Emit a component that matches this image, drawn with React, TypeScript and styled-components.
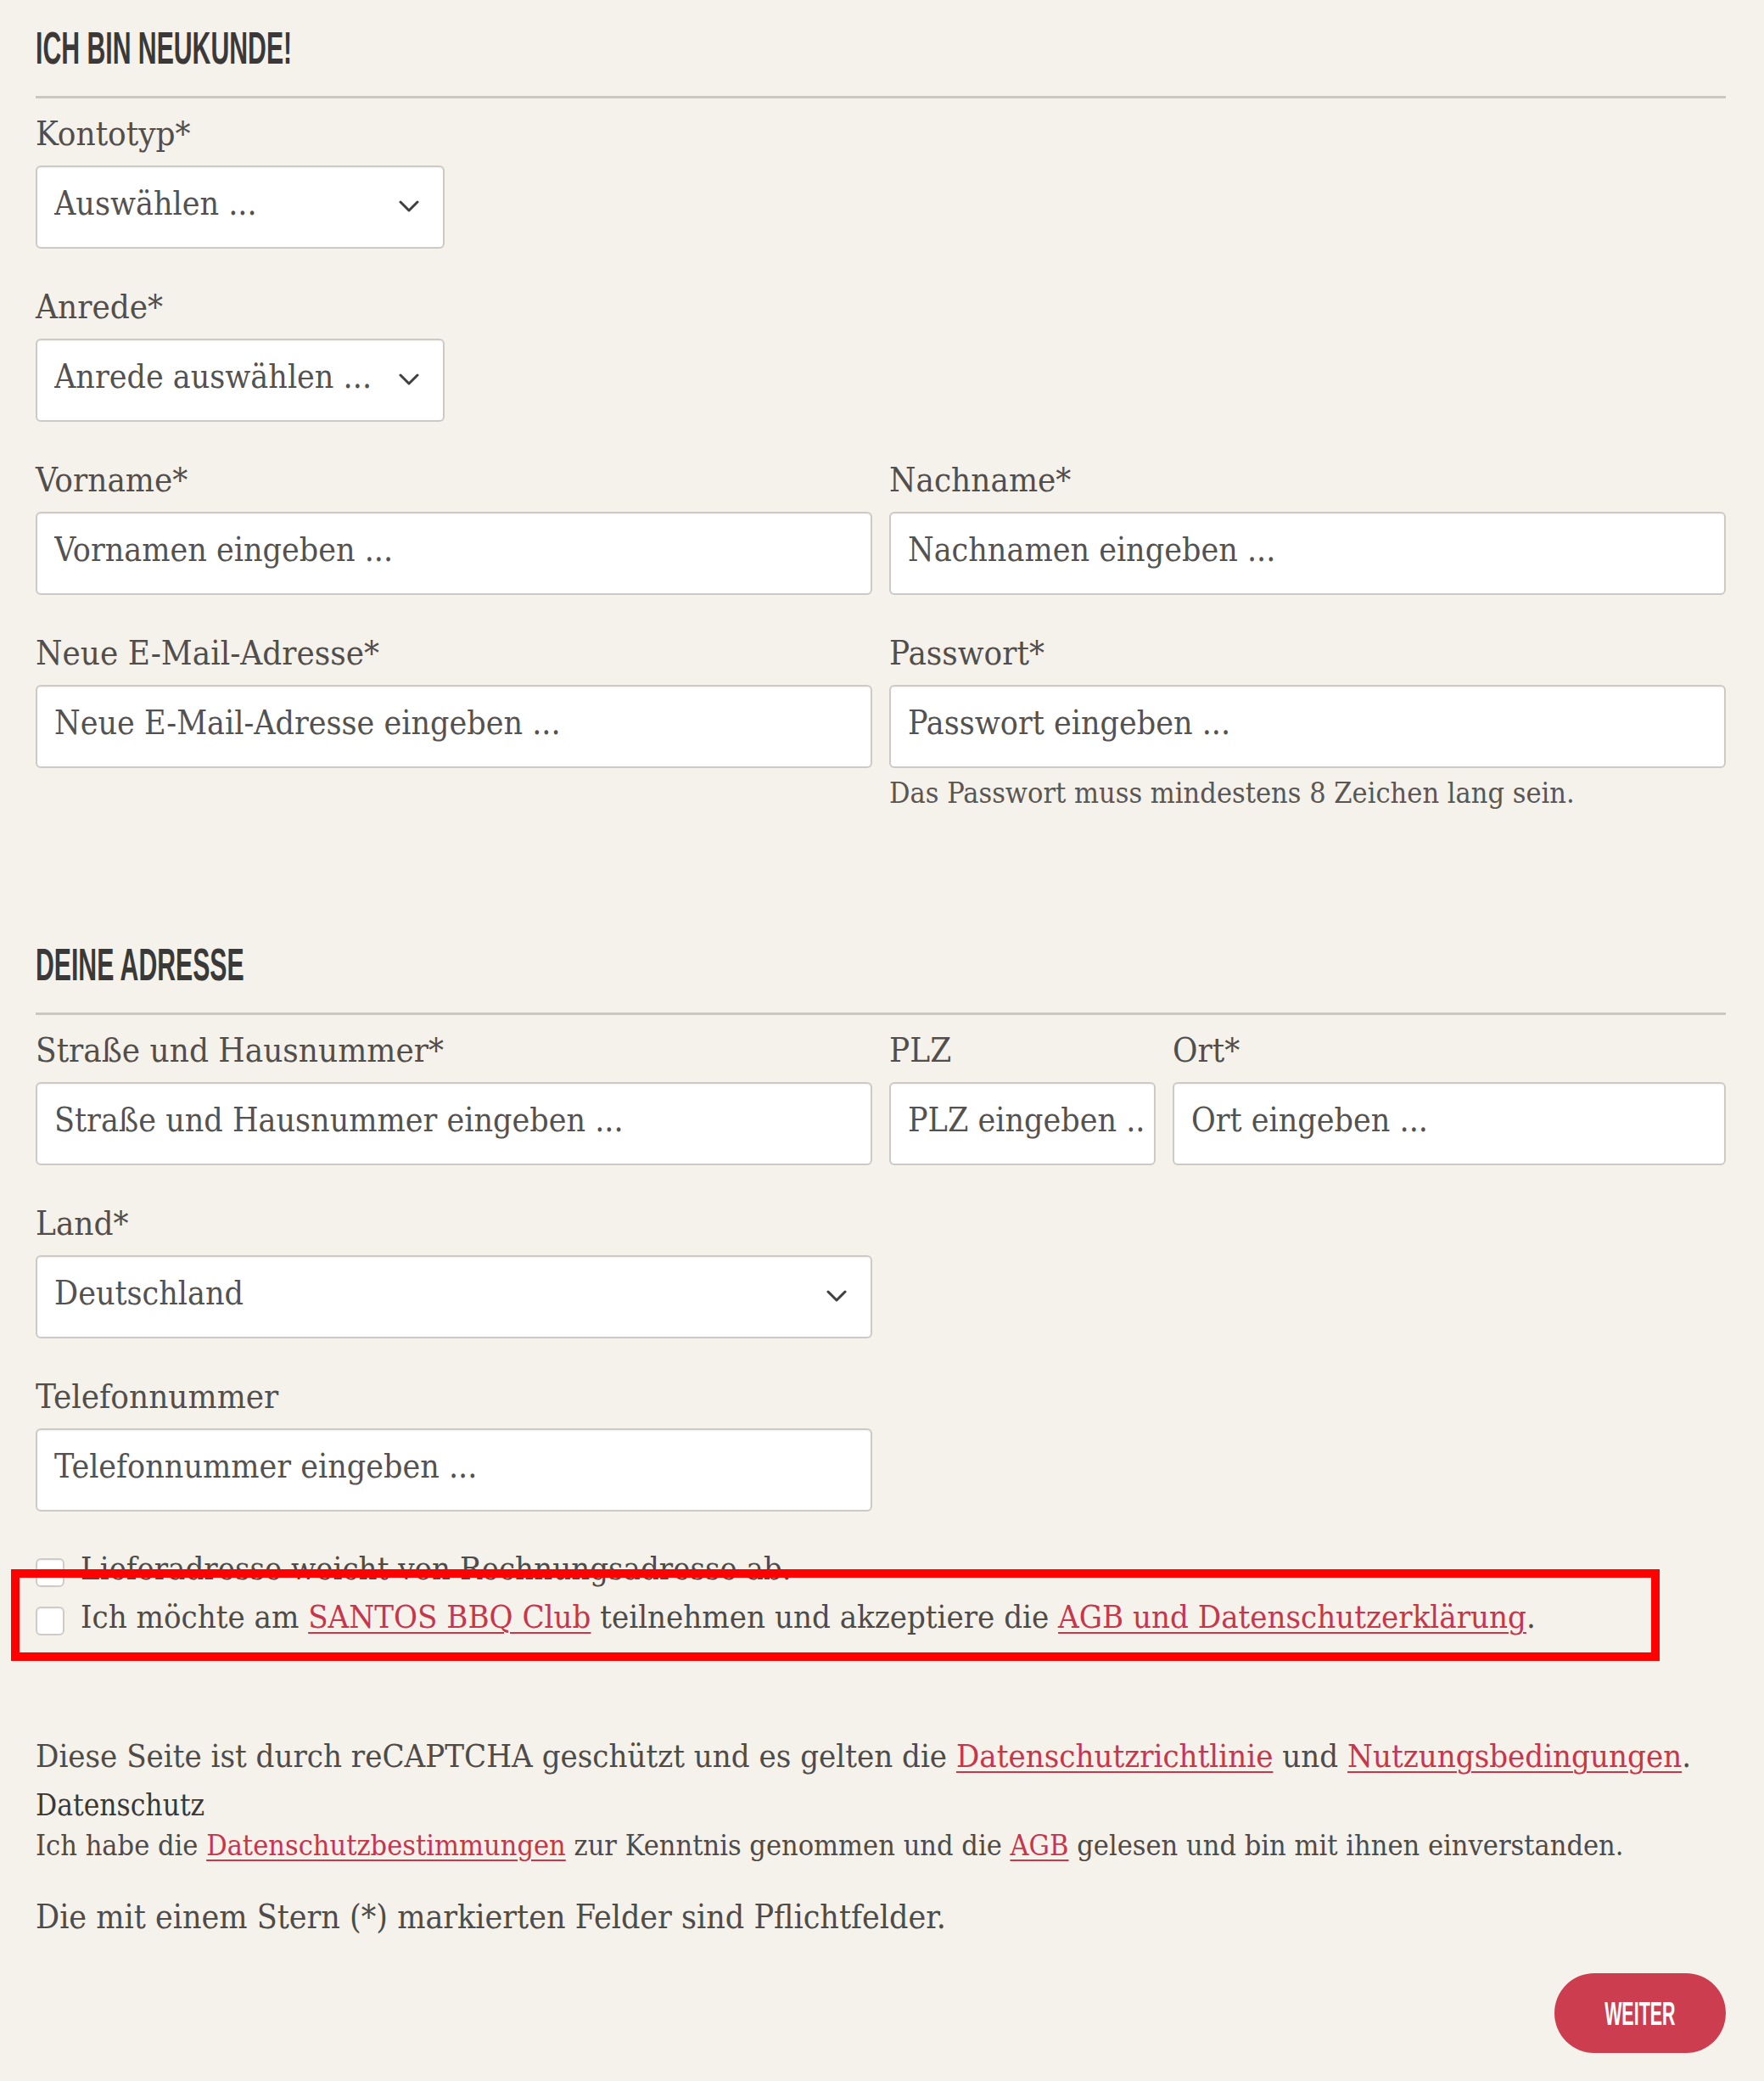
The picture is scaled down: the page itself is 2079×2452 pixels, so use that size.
import React from "react";
import styled, { createGlobalStyle } from "styled-components";

const GlobalStyle = createGlobalStyle`
  html, body {
    margin: 0;
    padding: 0;
    background: #f5f1eb;
  }
  body {
    font-family: "DejaVu Serif Condensed", "DejaVu Serif", serif;
    font-stretch: condensed;
    color: #504c49;
  }
  * { box-sizing: border-box; }
`;

const Page = styled.main`
  position: relative;
  width: 2079px;
  min-height: 2452px;
  padding: 30px 45px 0 42px;
  background: #f5f1eb;
`;

const Section = styled.section<{ $gap?: number }>`
  margin-top: ${(p) => p.$gap ?? 0}px;
`;

const SectionTitle = styled.h2`
  margin: 0;
  height: 53px;
  font-family: "Liberation Sans", Arial, sans-serif;
  font-weight: 700;
  font-size: 53px;
  line-height: 53px;
  color: #3a3938;
  white-space: nowrap;
`;

const Squeeze = styled.span`
  display: inline-block;
  transform: scaleX(0.57);
  transform-origin: left center;
`;

const Rule = styled.hr`
  margin: 30px 0 21px;
  border: 0;
  height: 3px;
  background: #cbc8c4;
`;

const Stack = styled.div`
  display: grid;
  row-gap: 48px;
`;

const TwoCols = styled.div`
  display: grid;
  grid-template-columns: 1fr 1fr;
  column-gap: 20px;
`;

const CityCols = styled.div`
  display: grid;
  grid-template-columns: 314px 1fr;
  column-gap: 20px;
`;

const Field = styled.div<{ $width?: number }>`
  display: flex;
  flex-direction: column;
  gap: 18px;
  width: ${(p) => (p.$width ? `${p.$width}px` : "auto")};
  min-width: 0;
`;

const Label = styled.label`
  display: block;
  height: 40px;
  font-size: 40px;
  line-height: 40px;
  color: #524e4b;
  white-space: nowrap;
`;

const Box = styled.div<{ $select?: boolean }>`
  height: 98px;
  display: flex;
  align-items: center;
  justify-content: space-between;
  gap: 12px;
  padding: 0 ${(p) => (p.$select ? 28 : 8)}px 8px 20px;
  background: #ffffff;
  border: 2px solid #cdcac6;
  border-radius: 6px;
  box-shadow: inset 0 1px 2px rgba(0, 0, 0, 0.06);
  font-size: 39px;
  color: #545250;
  white-space: nowrap;
  overflow: hidden;
`;

const BoxText = styled.span`
  line-height: 56px;
  overflow: hidden;
  text-overflow: clip;
`;

const Chevron = styled.svg`
  flex-shrink: 0;
  width: 24px;
  height: 15px;
  margin-top: 6px;
`;

const Hint = styled.p`
  margin: 12px 0 0;
  font-size: 34px;
  line-height: 34px;
  color: #5a5653;
  white-space: nowrap;
`;

const CheckGroup = styled.div`
  position: relative;
  margin-top: 47px;
  display: grid;
  row-gap: 15px;
`;

const CheckRow = styled.div`
  display: flex;
  align-items: flex-start;
  gap: 19px;
  font-size: 38px;
  line-height: 40px;
  color: #4f4b48;
  white-space: nowrap;
`;

const CheckBox = styled.span`
  flex-shrink: 0;
  width: 34px;
  height: 34px;
  margin-top: 8px;
  background: #ffffff;
  border: 2px solid #cfccc8;
  border-radius: 6px;
  box-shadow: inset 0 1px 2px rgba(0, 0, 0, 0.06);
`;

const Highlight = styled.div`
  position: absolute;
  top: 21px;
  left: -29px;
  width: 1943px;
  height: 108px;
  border: 10px solid #ff0000;
  pointer-events: none;
`;

const Link = styled.a`
  color: #c8364b;
  text-decoration: underline;
  text-decoration-thickness: 2px;
  text-underline-offset: 5px;
`;

const Legal = styled.div`
  margin-top: 122px;
`;

const Para = styled.p<{ $size: number; $gap?: number; $strong?: boolean }>`
  margin: ${(p) => p.$gap ?? 0}px 0 0;
  font-size: ${(p) => p.$size}px;
  line-height: ${(p) => (p.$size >= 36 ? 40 : 34)}px;
  color: ${(p) => (p.$strong ? "#3a3735" : "#4f4b48")};
  white-space: nowrap;
`;

const ButtonRow = styled.div`
  display: flex;
  justify-content: flex-end;
  margin-top: 46px;
`;

const Button = styled.button`
  width: 202px;
  height: 94px;
  display: flex;
  align-items: center;
  justify-content: center;
  border: 0;
  border-radius: 47px;
  background: #cc3e4f;
  color: #ffffff;
  font-family: "Liberation Sans", Arial, sans-serif;
  font-weight: 700;
  font-size: 39px;
  line-height: 39px;
  padding: 0;
  cursor: pointer;
`;

const ButtonText = styled.span`
  display: inline-block;
  transform: scaleX(0.55);
  transform-origin: center center;
`;

const ChevronIcon = () => (
  <Chevron viewBox="0 0 24 15" aria-hidden="true">
    <polyline
      points="2,2 12,12 22,2"
      fill="none"
      stroke="#3f3f3f"
      strokeWidth="3"
      strokeLinecap="round"
      strokeLinejoin="round"
    />
  </Chevron>
);

const Input = ({ text }: { text: string }) => (
  <Box>
    <BoxText>{text}</BoxText>
  </Box>
);

const Select = ({ text }: { text: string }) => (
  <Box $select>
    <BoxText>{text}</BoxText>
    <ChevronIcon />
  </Box>
);

export default function App() {
  return (
    <>
      <GlobalStyle />
      <Page>
        <Section>
          <SectionTitle>
            <Squeeze>ICH BIN NEUKUNDE!</Squeeze>
          </SectionTitle>
          <Rule />
          <Stack>
            <Field $width={482}>
              <Label>Kontotyp*</Label>
              <Select text="Auswählen ..." />
            </Field>
            <Field $width={482}>
              <Label>Anrede*</Label>
              <Select text="Anrede auswählen ..." />
            </Field>
            <TwoCols>
              <Field>
                <Label>Vorname*</Label>
                <Input text="Vornamen eingeben ..." />
              </Field>
              <Field>
                <Label>Nachname*</Label>
                <Input text="Nachnamen eingeben ..." />
              </Field>
            </TwoCols>
            <TwoCols>
              <Field>
                <Label>Neue E-Mail-Adresse*</Label>
                <Input text="Neue E-Mail-Adresse eingeben ..." />
              </Field>
              <div>
                <Field>
                  <Label>Passwort*</Label>
                  <Input text="Passwort eingeben ..." />
                </Field>
                <Hint>Das Passwort muss mindestens 8 Zeichen lang sein.</Hint>
              </div>
            </TwoCols>
          </Stack>
        </Section>

        <Section $gap={159}>
          <SectionTitle>
            <Squeeze>DEINE ADRESSE</Squeeze>
          </SectionTitle>
          <Rule />
          <Stack>
            <TwoCols>
              <Field>
                <Label>Straße und Hausnummer*</Label>
                <Input text="Straße und Hausnummer eingeben ..." />
              </Field>
              <CityCols>
                <Field>
                  <Label>PLZ</Label>
                  <Input text="PLZ eingeben ..." />
                </Field>
                <Field>
                  <Label>Ort*</Label>
                  <Input text="Ort eingeben ..." />
                </Field>
              </CityCols>
            </TwoCols>
            <TwoCols>
              <Field>
                <Label>Land*</Label>
                <Select text="Deutschland" />
              </Field>
            </TwoCols>
            <TwoCols>
              <Field>
                <Label>Telefonnummer</Label>
                <Input text="Telefonnummer eingeben ..." />
              </Field>
            </TwoCols>
          </Stack>

          <CheckGroup>
            <CheckRow>
              <CheckBox />
              <span>Lieferadresse weicht von Rechnungsadresse ab.</span>
            </CheckRow>
            <CheckRow>
              <CheckBox />
              <span>
                Ich möchte am <Link href="#">SANTOS BBQ Club</Link> teilnehmen und akzeptiere die{" "}
                <Link href="#">AGB und Datenschutzerklärung</Link>.
              </span>
            </CheckRow>
            <Highlight />
          </CheckGroup>
        </Section>

        <Legal>
          <Para $size={38}>
            Diese Seite ist durch reCAPTCHA geschützt und es gelten die{" "}
            <Link href="#">Datenschutzrichtlinie</Link> und <Link href="#">Nutzungsbedingungen</Link>.
          </Para>
          <Para $size={35} $strong $gap={21}>
            Datenschutz
          </Para>
          <Para $size={34} $gap={13}>
            Ich habe die <Link href="#">Datenschutzbestimmungen</Link> zur Kenntnis genommen und die{" "}
            <Link href="#">AGB</Link> gelesen und bin mit ihnen einverstanden.
          </Para>
          <Para $size={39} $gap={48}>
            Die mit einem Stern (*) markierten Felder sind Pflichtfelder.
          </Para>
          <ButtonRow>
            <Button type="button">
              <ButtonText>WEITER</ButtonText>
            </Button>
          </ButtonRow>
        </Legal>
      </Page>
    </>
  );
}
